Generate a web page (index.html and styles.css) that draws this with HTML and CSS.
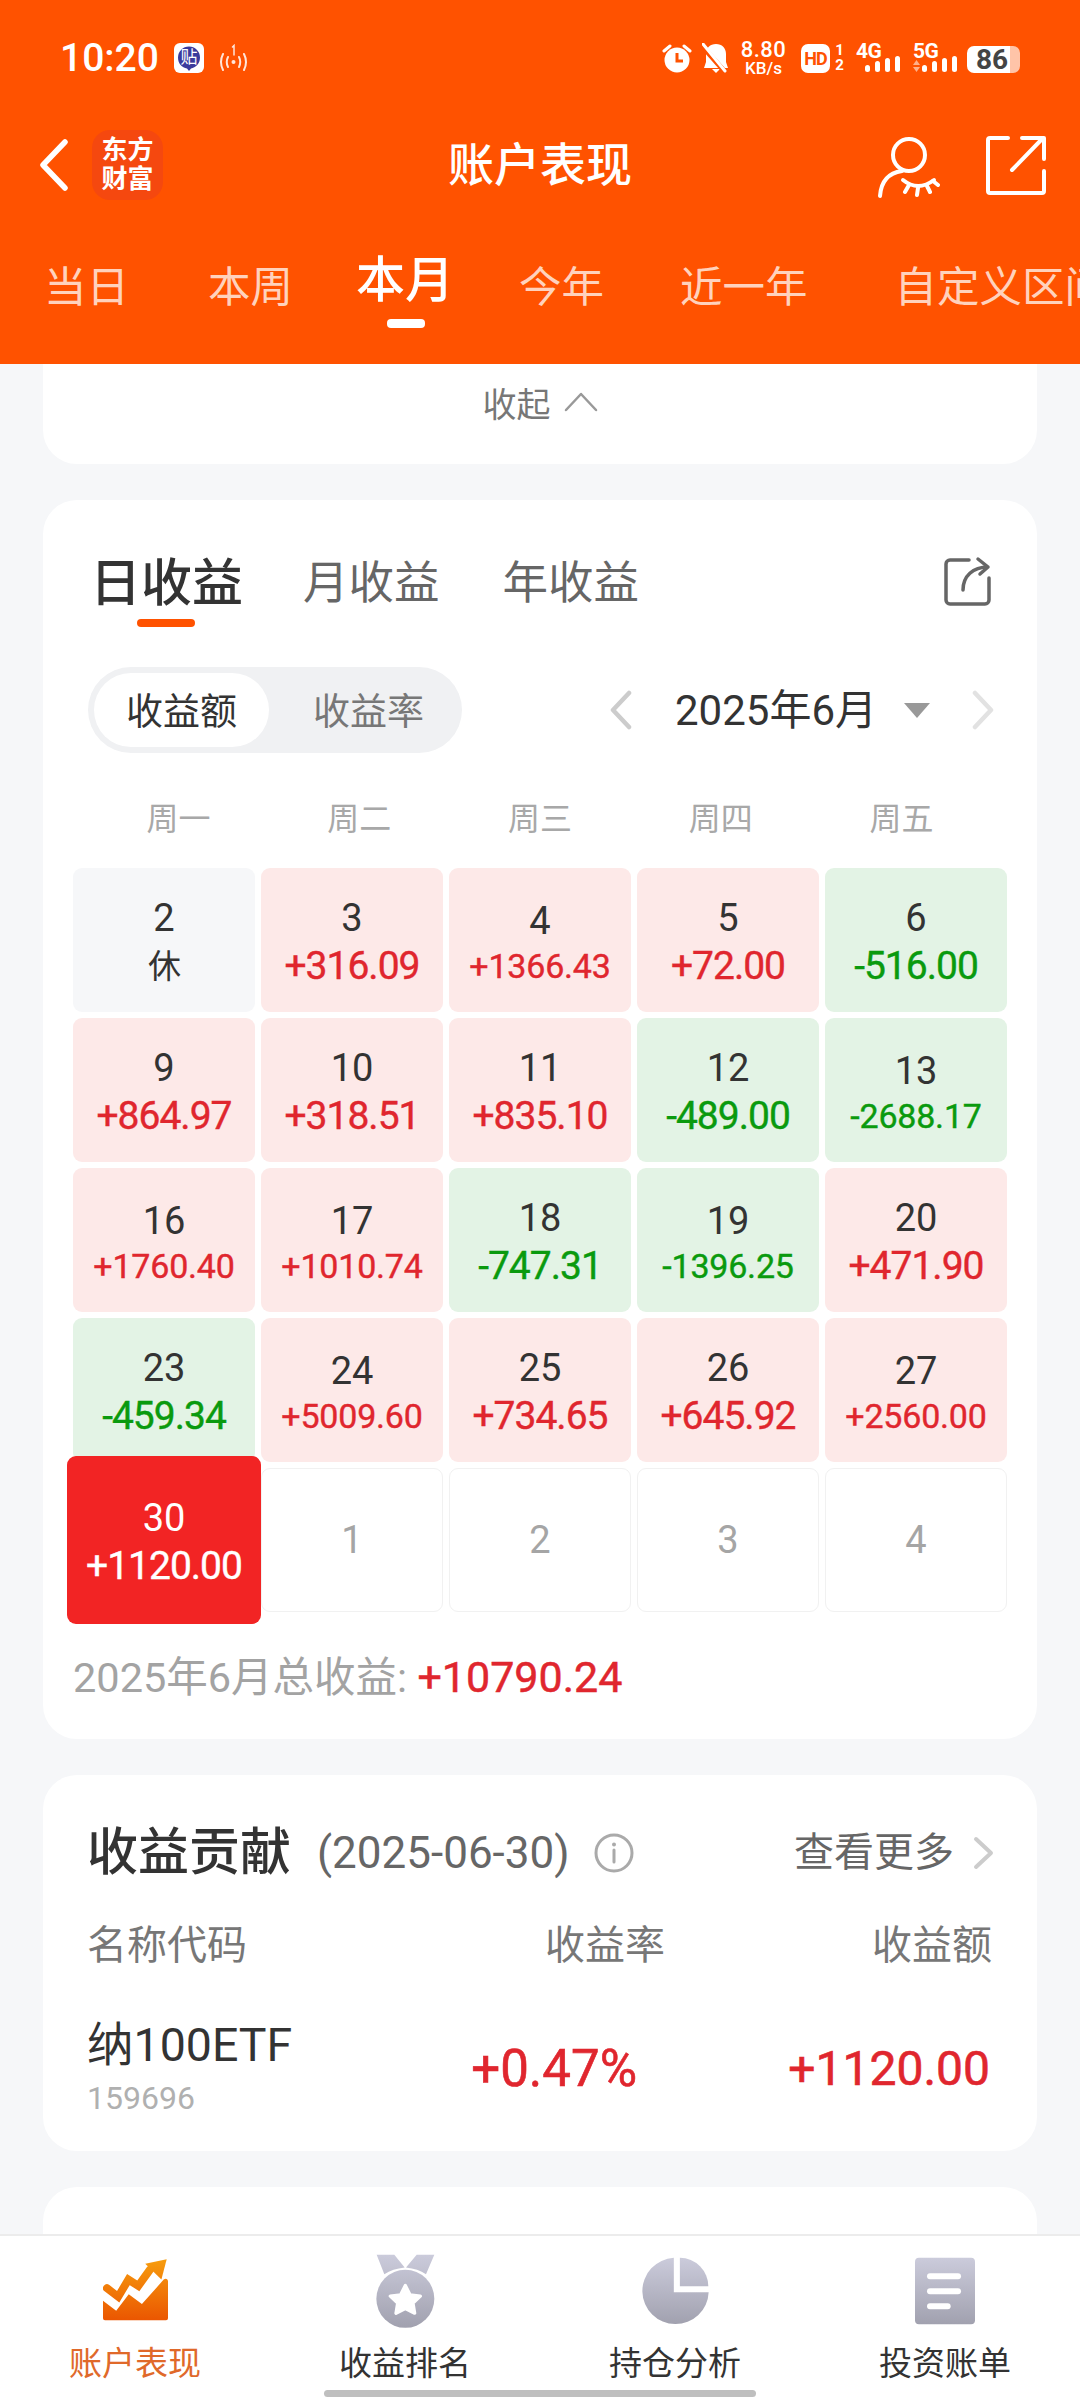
FILE: index.html
```html
<!DOCTYPE html>
<html lang="zh-CN">
<head>
    <meta charset="UTF-8">
    <meta name="viewport" content="width=device-width, initial-scale=1.0">
    <title>账户表现</title>
    <link rel="stylesheet" href="styles.css">
</head>
<body>
<div class="page">

    <div class="header">
        <div class="status">
            <div class="status-left">
                <span class="time">10:20</span>
                <svg class="ic-tie" width="30" height="30" viewBox="0 0 30 30">
                    <rect width="30" height="30" rx="6" fill="#fff"/>
                    <path d="M15 3.500a11 11 0 0 1 11 11c0 6-4.500 10.500-9 10.900L15 28l-2-2.600C8 25 4 20.500 4 14.500a11 11 0 0 1 11-11z" fill="#3b3a9c"/>
                    <text x="15" y="20" text-anchor="middle" class="tie-text">贴</text>
                </svg>
                <svg class="ic-hotspot" width="31" height="28" viewBox="0 0 31 28" fill="none" stroke="#fff" stroke-width="2" stroke-linecap="round" opacity="0.85">
                    <path d="M5 10q-4 8 0 16"/>
                    <path d="M10 13q-2.500 5 0 10"/>
                    <path d="M21 13q2.500 5 0 10"/>
                    <path d="M26 10q4 8 0 16"/>
                    <circle cx="15.500" cy="18" r="2" fill="#fff" stroke="none"/>
                    <path d="M14.500 3l1.500-1.500V11" stroke-width="1.500"/>
                </svg>
            </div>
            <div class="status-right">
                <svg width="30" height="30" viewBox="0 0 30 30">
                    <circle cx="15" cy="17" r="12.500" fill="#fff"/>
                    <path d="M15 10v8h6" fill="none" stroke="#ff5200" stroke-width="3"/>
                    <path d="M2 8l6-5M28 8l-6-5" stroke="#fff" stroke-width="3" stroke-linecap="round"/>
                </svg>
                <svg class="ic-bell" width="26" height="30" viewBox="0 0 26 30">
                    <path d="M14 1c6 0 10 4 10 10v8l2 6H2l2-6v-8C4 5 8 1 14 1z" fill="#fff"/>
                    <path d="M10 26h8l-4 4z" fill="#fff"/>
                    <path d="M0 3l23 26" stroke="#ff5200" stroke-width="5"/>
                    <path d="M1 1l22 27" stroke="#fff" stroke-width="3" stroke-linecap="round"/>
                </svg>
                <div class="speed">
                    <span class="speed-num">8.80</span>
                    <span class="speed-unit">KB/s</span>
                </div>
                <div class="hd">HD</div>
                <div class="sim"><span>1</span><span>2</span></div>
                <div class="net">
                    <span>4G</span>
                    <svg width="44" height="30" viewBox="0 0 44 30" fill="#fff">
                        <rect x="9" y="22" width="5" height="7" rx="2.500"/>
                        <rect x="19" y="18" width="5" height="11" rx="2.500"/>
                        <rect x="29" y="15" width="5" height="14" rx="2.500"/>
                        <rect x="39" y="13" width="5" height="16" rx="2.500"/>
                    </svg>
                </div>
                <div class="net">
                    <span>5G</span>
                    <svg width="44" height="30" viewBox="0 0 44 30" fill="#fff">
                        <path d="M3.500 17l3.500 5H0z" fill="#ffb08a"/>
                        <path d="M3.500 29l3.500-5H0z" fill="#ffb08a"/>
                        <rect x="9" y="22" width="5" height="7" rx="2.500"/>
                        <rect x="19" y="18" width="5" height="11" rx="2.500"/>
                        <rect x="29" y="15" width="5" height="14" rx="2.500"/>
                        <rect x="39" y="13" width="5" height="16" rx="2.500"/>
                    </svg>
                </div>
                <div class="battery"><span>86</span></div>
            </div>
        </div>

        <div class="nav">
            <svg class="back" width="30" height="52" viewBox="0 0 30 52" fill="none" stroke="#fff" stroke-width="5.500" stroke-linecap="round" stroke-linejoin="round">
                <path d="M26 3L4 26l22 23"/>
            </svg>
            <div class="logo">东方<br>财富</div>
            <div class="nav-title">账户表现</div>
            <svg class="ic-user" width="64" height="66" viewBox="876 126 64 66" fill="none" stroke="#fff" stroke-width="4" stroke-linecap="round">
                <circle cx="909" cy="149" r="16"/>
                <path d="M880 190c1-14 8-23 22-25"/>
                <path d="M903 174q15 12 31 0"/>
                <path d="M909 179l-4 7M918 182l-1 7M927 180l3 6M933 175l5 4"/>
            </svg>
            <svg class="ic-export" width="60" height="60" viewBox="986 131 60 60" fill="none" stroke="#fff" stroke-width="4" stroke-linecap="round" stroke-linejoin="round">
                <path d="M1008 134h-18a2 2 0 0 0-2 2v51a2 2 0 0 0 2 2h52a2 2 0 0 0 2-2v-20"/>
                <path d="M1012 166l31-32M1022 134h22v21"/>
            </svg>
        </div>

        <div class="tabs">
            <div class="tab">当日</div>
            <div class="tab">本周</div>
            <div class="tab active">本月</div>
            <div class="tab">今年</div>
            <div class="tab">近一年</div>
            <div class="tab">自定义区间</div>
        </div>
    </div>

    <div class="content">
        <div class="card card-top">
            <span>收起</span>
            <svg width="34" height="20" viewBox="0 0 34 20" fill="none" stroke="#999" stroke-width="2.500" stroke-linecap="round" stroke-linejoin="round">
                <path d="M2 18L17 2l15 16"/>
            </svg>
        </div>

        <div class="card card-calendar">
            <div class="cal-tabs">
                <div class="cal-tab-group">
                    <div class="cal-tab active">日收益<i></i></div>
                    <div class="cal-tab">月收益</div>
                    <div class="cal-tab">年收益</div>
                </div>
                <svg width="50" height="50" viewBox="944 556 50 50" fill="none" stroke="#666" stroke-width="3.500" stroke-linecap="round" stroke-linejoin="round">
                    <path d="M970 560h-19a4 4 0 0 0-4 4v36a4 4 0 0 0 4 4h35a4 4 0 0 0 4-4v-22"/>
                    <path d="M964 590c0-14 10-23 25-23M979 559l10 8-8 7"/>
                </svg>
            </div>

            <div class="cal-controls">
                <div class="pill">
                    <div class="pill-item active">收益额</div>
                    <div class="pill-item">收益率</div>
                </div>
                <div class="month-nav">
                    <svg width="23" height="40" viewBox="0 0 23 40" fill="none" stroke="#ccc" stroke-width="4.500" stroke-linecap="round" stroke-linejoin="round">
                        <path d="M20 3L4 20l16 17"/>
                    </svg>
                    <span class="month">2025年6月</span>
                    <span class="month-arrow"></span>
                    <svg width="24" height="40" viewBox="0 0 24 40" fill="none" stroke="#e2e2e2" stroke-width="4.500" stroke-linecap="round" stroke-linejoin="round">
                        <path d="M4 3l16 17L4 37"/>
                    </svg>
                </div>
            </div>

            <div class="weekdays">
                <span>周一</span><span>周二</span><span>周三</span><span>周四</span><span>周五</span>
            </div>

            <div class="grid">
                <div class="cell rest"><div class="day">2</div><div class="val">休</div></div>
                <div class="cell up"><div class="day">3</div><div class="val">+316.09</div></div>
                <div class="cell up"><div class="day">4</div><div class="val sm">+1366.43</div></div>
                <div class="cell up"><div class="day">5</div><div class="val">+72.00</div></div>
                <div class="cell down"><div class="day">6</div><div class="val">-516.00</div></div>

                <div class="cell up"><div class="day">9</div><div class="val">+864.97</div></div>
                <div class="cell up"><div class="day">10</div><div class="val">+318.51</div></div>
                <div class="cell up"><div class="day">11</div><div class="val">+835.10</div></div>
                <div class="cell down"><div class="day">12</div><div class="val">-489.00</div></div>
                <div class="cell down"><div class="day">13</div><div class="val sm">-2688.17</div></div>

                <div class="cell up"><div class="day">16</div><div class="val sm">+1760.40</div></div>
                <div class="cell up"><div class="day">17</div><div class="val sm">+1010.74</div></div>
                <div class="cell down"><div class="day">18</div><div class="val">-747.31</div></div>
                <div class="cell down"><div class="day">19</div><div class="val sm">-1396.25</div></div>
                <div class="cell up"><div class="day">20</div><div class="val">+471.90</div></div>

                <div class="cell down"><div class="day">23</div><div class="val">-459.34</div></div>
                <div class="cell up"><div class="day">24</div><div class="val sm">+5009.60</div></div>
                <div class="cell up"><div class="day">25</div><div class="val">+734.65</div></div>
                <div class="cell up"><div class="day">26</div><div class="val">+645.92</div></div>
                <div class="cell up"><div class="day">27</div><div class="val sm">+2560.00</div></div>

                <div class="cell today"><div class="day">30</div><div class="val">+1120.00</div></div>
                <div class="cell off"><div class="day">1</div></div>
                <div class="cell off"><div class="day">2</div></div>
                <div class="cell off"><div class="day">3</div></div>
                <div class="cell off"><div class="day">4</div></div>
            </div>

            <div class="total">2025年6月总收益: <b>+10790.24</b></div>
        </div>

        <div class="card card-contrib">
            <div class="contrib-head">
                <span class="contrib-title">收益贡献</span>
                <span class="contrib-date">(2025-06-30)</span>
                <svg class="ic-info" width="40" height="40" viewBox="0 0 40 40" fill="none" stroke="#aaa" stroke-width="3">
                    <circle cx="20" cy="20" r="18"/>
                    <path d="M20 17v12" stroke-linecap="round"/>
                    <circle cx="20" cy="11.500" r="2" fill="#aaa" stroke="none"/>
                </svg>
                <span class="more">查看更多</span>
                <svg width="22" height="34" viewBox="0 0 22 34" fill="none" stroke="#ccc" stroke-width="4" stroke-linecap="round" stroke-linejoin="round">
                    <path d="M3 3l15 14L3 31"/>
                </svg>
            </div>
            <div class="contrib-cols">
                <span>名称代码</span>
                <span>收益率</span>
                <span class="col-right">收益额</span>
            </div>
            <div class="contrib-row">
                <div>
                    <div class="fund-name">纳100ETF</div>
                    <div class="fund-code">159696</div>
                </div>
                <div class="fund-rate">+0.47%</div>
                <div class="fund-amount">+1120.00</div>
            </div>
        </div>

        <div class="card card-next"></div>
    </div>

    <div class="tabbar">
        <div class="bar-item active">
            <svg width="65" height="64" viewBox="128 50 197 193">
                <defs>
                    <linearGradient id="gOrange" gradientUnits="userSpaceOnUse" x1="0" y1="50" x2="0" y2="243">
                        <stop offset="0" stop-color="#f79d0e"/>
                        <stop offset="1" stop-color="#ea5300"/>
                    </linearGradient>
                </defs>
                <path d="M140 138l34 26 31-52 30 19 36-50" fill="none" stroke="url(#gOrange)" stroke-width="24" stroke-linecap="round" stroke-linejoin="miter"/>
                <path d="M256 64l65-14-16 62z" fill="url(#gOrange)"/>
                <path d="M128 176l40 30 38-50 40 30 66-74c6-5 13-2 13 6v111a6 6 0 0 1-6 6H134a6 6 0 0 1-6-6z" fill="url(#gOrange)"/>
            </svg>
            <span>账户表现</span>
        </div>
        <div class="bar-item">
            <svg width="59" height="72" viewBox="950 40 177 217">
                <defs>
                    <linearGradient id="gGrayA" gradientUnits="userSpaceOnUse" x1="0" y1="40" x2="0" y2="257">
                        <stop offset="0" stop-color="#cbcbdb"/>
                        <stop offset="1" stop-color="#a1a1af"/>
                    </linearGradient>
                </defs>
                <path d="M952 40h53l31 38q-36 4-61 20z" fill="url(#gGrayA)"/>
                <path d="M1125 40h-53l-32 38q36 4 60 20z" fill="url(#gGrayA)"/>
                <circle cx="1038" cy="172" r="87" fill="url(#gGrayA)"/>
                <path d="M1038 132l14 28 31 4-22 21 5 30-28-14-28 14 5-30-22-21 31-4z" fill="#fff" stroke="#fff" stroke-width="10" stroke-linejoin="round"/>
            </svg>
            <span>收益排名</span>
        </div>
        <div class="bar-item">
            <svg width="67" height="66" viewBox="127 50 200 198">
                <defs>
                    <linearGradient id="gGrayB" gradientUnits="userSpaceOnUse" x1="0" y1="50" x2="0" y2="248">
                        <stop offset="0" stop-color="#cbcbdb"/>
                        <stop offset="1" stop-color="#a1a1af"/>
                    </linearGradient>
                </defs>
                <path d="M222 50a99 99 0 1 0 104 103H222z" fill="url(#gGrayB)"/>
                <path d="M240 50a85 85 0 0 1 85 85h-85z" fill="url(#gGrayB)"/>
            </svg>
            <span>持仓分析</span>
        </div>
        <div class="bar-item">
            <svg width="60" height="66" viewBox="947 48 180 199">
                <defs>
                    <linearGradient id="gGrayC" gradientUnits="userSpaceOnUse" x1="0" y1="48" x2="0" y2="247">
                        <stop offset="0" stop-color="#cbcbdb"/>
                        <stop offset="1" stop-color="#a1a1af"/>
                    </linearGradient>
                </defs>
                <rect x="947" y="48" width="180" height="199" rx="12" fill="url(#gGrayC)"/>
                <rect x="983" y="94" width="102" height="18" rx="9" fill="#fff"/>
                <rect x="983" y="139" width="102" height="18" rx="9" fill="#fff"/>
                <rect x="983" y="184" width="71" height="18" rx="9" fill="#fff"/>
            </svg>
            <span>投资账单</span>
        </div>
        <div class="home-bar"></div>
    </div>

</div>
</body>
</html>
```

FILE: styles.css
```css
* {
    box-sizing: border-box;
}

body {
    margin: 0;
    font-family: Roboto, "Noto Sans CJK SC", sans-serif;
    color: #333;
    background-color: #f6f7f9;
}

.page {
    width: 1080px;
    height: 2400px;
    display: flex;
    flex-direction: column;
    overflow: hidden;
}

/* header */
.header {
    height: 364px;
    flex: none;
    background-color: #ff5200;
    color: #fff;
    overflow: hidden;
}

.status {
    height: 115px;
    padding: 43px 60px 0 60px;
    display: flex;
    justify-content: space-between;
}

.status-left,
.status-right {
    display: flex;
    align-items: center;
    height: 30px;
}

.time {
    font-size: 39px;
    font-weight: 500;
    line-height: 30px;
    width: 114px;
}

.ic-hotspot {
    margin-left: 14px;
}

.tie-text {
    font-size: 17px;
    fill: #fff;
}

.ic-bell {
    margin-left: 10px;
}

.speed {
    margin-left: 11px;
    width: 49px;
    display: flex;
    flex-direction: column;
    align-items: center;
}

.speed-num {
    font-size: 22px;
    font-weight: 500;
    line-height: 21px;
    letter-spacing: 0.500px;
}

.speed-unit {
    font-size: 17px;
    font-weight: 500;
    line-height: 17px;
}

.hd {
    margin-left: 13px;
    width: 29px;
    height: 29px;
    border-radius: 7px;
    background-color: #fff;
    color: #ff5200;
    font-size: 18px;
    font-weight: 700;
    letter-spacing: -1px;
    line-height: 29px;
    text-align: center;
}

.sim {
    margin-left: 6px;
    width: 7px;
    display: flex;
    flex-direction: column;
    align-items: center;
    font-size: 15px;
    font-weight: 700;
    line-height: 15px;
}

.net {
    position: relative;
    margin-left: 13px;
    width: 44px;
    height: 30px;
}

.net span {
    position: absolute;
    left: 0;
    top: 0;
    font-size: 21px;
    font-weight: 700;
    line-height: 16px;
    letter-spacing: -0.500px;
}

.battery {
    margin-left: 10px;
    width: 53px;
    height: 27px;
    margin-top: 2px;
    border-radius: 7px;
    background: linear-gradient(to right, #fff 82%, #ffc4a8 82%);
    color: #444;
    font-size: 28px;
    font-weight: 700;
    line-height: 27px;
    padding-left: 9px;
}

.nav {
    height: 100px;
    display: flex;
    align-items: center;
    padding-left: 39px;
}

.back {
    flex: none;
}

.logo {
    margin-left: 23px;
    width: 71px;
    height: 70px;
    border-radius: 18px;
    background-color: #f5480f;
    font-size: 26px;
    font-weight: 700;
    line-height: 29px;
    text-align: center;
    padding-top: 6px;
}

.nav-title {
    margin-left: 285px;
    width: 184px;
    font-size: 46px;
    font-weight: 500;
    line-height: 60px;
    white-space: nowrap;
}

.ic-user {
    margin-left: 244px;
}

.ic-export {
    margin-left: 46px;
}

.tabs {
    display: flex;
    height: 54px;
    margin-top: 46px;
    padding-left: 44px;
    white-space: nowrap;
}

.tab {
    font-size: 42.500px;
    line-height: 54px;
    color: #ffd2bd;
    flex: none;
}

.tab:nth-child(2) { margin-left: 79px; }
.tab:nth-child(3) { margin-left: 63px; }
.tab:nth-child(4) { margin-left: 65px; }
.tab:nth-child(5) { margin-left: 76px; }
.tab:nth-child(6) { margin-left: 87px; }

.tab.active {
    position: relative;
    font-size: 49px;
    font-weight: 500;
    color: #fff;
    transform: translateY(-7px);
}

.tab.active::after {
    content: "";
    position: absolute;
    left: 31px;
    bottom: -20px;
    width: 38px;
    height: 9px;
    border-radius: 4px;
    background-color: #fff;
}

/* cards */
.content {
    flex: 1;
    padding: 0 43px;
    display: flex;
    flex-direction: column;
    gap: 36px;
    overflow: hidden;
}

.card {
    flex: none;
    background-color: #fff;
    border-radius: 34px;
}

.card-top {
    height: 100px;
    border-radius: 0 0 34px 34px;
    padding-top: 16px;
    display: flex;
    justify-content: center;
    gap: 13px;
    font-size: 34px;
    line-height: 50px;
    color: #777;
}

.card-top svg {
    margin-top: 12px;
}

.card-calendar {
    height: 1239px;
    padding-top: 56px;
}

.cal-tabs {
    display: flex;
    justify-content: space-between;
    padding: 0 44px 0 47px;
}

.cal-tab-group {
    display: flex;
    gap: 63px;
}

.cal-tab {
    position: relative;
    font-size: 45.500px;
    line-height: 56px;
    color: #666;
}

.cal-tab.active {
    font-size: 51px;
    font-weight: 500;
    color: #333;
    margin-right: -3px;
}

.cal-tab i {
    position: absolute;
    left: 47px;
    top: 63px;
    width: 58px;
    height: 8px;
    border-radius: 4px;
    background-color: #ff5200;
}

.cal-controls {
    margin-top: 55px;
    padding: 0 42px 0 45px;
    display: flex;
    justify-content: space-between;
    align-items: center;
}

.pill {
    width: 374px;
    height: 86px;
    padding: 6px;
    border-radius: 43px;
    background-color: #f0f1f3;
    display: flex;
}

.pill-item {
    flex: 1;
    font-size: 37px;
    line-height: 80px;
    text-align: center;
    color: #777;
    border-radius: 37px;
}

.pill-item:last-child {
    padding-left: 12px;
    flex: none;
    width: 187px;
}

.pill-item.active {
    color: #333;
    background-color: #fff;
}

.month-nav {
    display: flex;
    align-items: center;
}

.month {
    margin-left: 43px;
    padding-top: 2px;
    font-size: 42px;
    line-height: 50px;
    white-space: nowrap;
}

.month-arrow {
    margin: 0 41px 0 27px;
    width: 0;
    height: 0;
    border-left: 13px solid transparent;
    border-right: 13px solid transparent;
    border-top: 15px solid #999;
}

.weekdays {
    margin-top: 45px;
    padding: 0 45px;
    display: grid;
    grid-template-columns: repeat(5, 1fr);
    font-size: 32px;
    line-height: 42px;
    text-align: center;
    color: #a8a8a8;
}

.grid {
    margin: 28px 30px 0;
    display: grid;
    grid-template-columns: repeat(5, 182px);
    grid-auto-rows: 144px;
    gap: 6px;
}

.cell {
    display: flex;
    flex-direction: column;
    align-items: center;
    justify-content: center;
    border-radius: 9px;
    text-align: center;
}

.cell.up {
    background-color: #fde9e8;
}

.cell.down {
    background-color: #e3f3e5;
}

.cell.rest {
    background-color: #f6f7f9;
}

.cell.off {
    background-color: #fff;
    border: 1.500px solid #f1f1f1;
    color: #a5a5a5;
}

.cell.today {
    position: relative;
    z-index: 1;
    margin: -12px -6px;
    background-color: #f22424;
    color: #fff;
}

.day {
    font-size: 38px;
    line-height: 52px;
}

.val {
    font-size: 39px;
    line-height: 45px;
    letter-spacing: -1px;
    -webkit-text-stroke: 0.400px currentColor;
}

.val.sm {
    font-size: 34px;
    line-height: 39px;
    letter-spacing: -0.200px;
}

.up .val {
    color: #e0262e;
}

.down .val {
    color: #0a9a0e;
}

.rest .val {
    font-size: 33px;
    -webkit-text-stroke: 0;
}

.total {
    margin: 40px 0 0 30px;
    font-size: 41.500px;
    line-height: 50px;
    color: #a3a3a3;
}

.total b {
    font-size: 43px;
    font-weight: 400;
    color: #e0262e;
    -webkit-text-stroke: 0.500px currentColor;
}

.card-contrib {
    height: 376px;
    padding: 53px 42px 0 44px;
}

.contrib-head {
    display: flex;
    align-items: center;
    height: 50px;
}

.contrib-title {
    font-size: 51px;
    font-weight: 500;
    line-height: 50px;
}

.contrib-date {
    margin-left: 26px;
    font-size: 44px;
    color: #666;
}

.ic-info {
    margin-left: 24px;
}

.more {
    margin-left: auto;
    font-size: 40px;
    line-height: 46px;
    color: #666;
}

.contrib-head svg:last-child {
    margin-left: 19px;
}

.contrib-cols {
    margin-top: 42px;
    margin-right: 3px;
    display: grid;
    grid-template-columns: 1fr 120px 327px;
    font-size: 40px;
    line-height: 52px;
    color: #777;
}

.col-right {
    text-align: right;
}

.contrib-row {
    margin-top: 43px;
    margin-right: 5px;
    display: grid;
    grid-template-columns: 1fr auto 353px;
    align-items: center;
}

.fund-name {
    font-size: 46.500px;
    line-height: 60px;
}

.fund-code {
    font-size: 32px;
    line-height: 46px;
    color: #b0b0b0;
}

.fund-rate {
    font-size: 51px;
    color: #e0262e;
    -webkit-text-stroke: 0.600px currentColor;
}

.fund-amount {
    font-size: 48px;
    color: #e0262e;
    text-align: right;
    -webkit-text-stroke: 0.600px currentColor;
}

.card-next {
    height: 300px;
}

/* bottom bar */
.tabbar {
    height: 166px;
    flex: none;
    position: relative;
    background-color: #fff;
    border-top: 2px solid #ececec;
    display: grid;
    grid-template-columns: repeat(4, 270px);
}

.bar-item {
    height: 164px;
    padding-top: 18px;
    display: flex;
    flex-direction: column;
    align-items: center;
    font-size: 33px;
    line-height: 40px;
    color: #333;
}

.bar-item svg {
    height: 74px;
    flex: none;
}

.bar-item span {
    margin-top: 16px;
}

.bar-item.active span {
    color: #e0692a;
}

.home-bar {
    position: absolute;
    left: 324px;
    bottom: 3px;
    width: 432px;
    height: 7px;
    border-radius: 4px;
    background-color: #bfbfbf;
}
```
